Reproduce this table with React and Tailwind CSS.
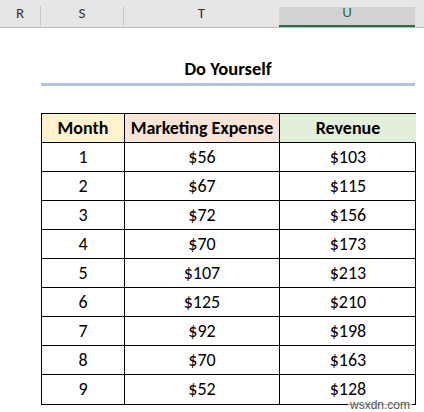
const rows = [
  [1, '$56', '$103'],
  [2, '$67', '$115'],
  [3, '$72', '$156'],
  [4, '$70', '$173'],
  [5, '$107', '$213'],
  [6, '$125', '$210'],
  [7, '$92', '$198'],
  [8, '$70', '$163'],
  [9, '$52', '$128'],
];

const font = { fontFamily: 'Carlito, Lato, "Liberation Sans", sans-serif' };

export default function App() {
  return (
    <div className="w-[424px] h-[412px] bg-white relative overflow-hidden" style={font}>
      {/* Column headers */}
      <div className="flex h-[28px] bg-[#e6e6e6] border-b border-[#bcbcbc] text-[15px] text-[#333]">
        <div className="w-[41px] flex items-end justify-center pb-[3px] border-r border-[#c8c8c8] mt-[6px]">R</div>
        <div className="w-[83px] flex items-end justify-center pb-[3px] border-r border-[#c8c8c8] mt-[6px]">S</div>
        <div className="w-[155px] flex items-end justify-center pb-[3px] mt-[6px]">T</div>
        <div className="w-[136px] flex items-end justify-center pb-[2px] bg-[#d2d2d2] border-b-2 border-[#217346] mt-[7px] text-[#217346]">U</div>
        <div className="flex-1" />
      </div>

      {/* Title */}
      <div className="ml-[41px] w-[374px] pt-[30px]">
        <div className="text-center font-bold text-[18.5px] leading-[22px] text-black">Do Yourself</div>
        <div className="mt-[3px] h-[3px] bg-[#aec5e2]" />
      </div>

      {/* Table */}
      <div className="ml-[41px] mt-[27px] w-[375px] border border-black grid grid-cols-[83px_155px_136px] text-[18px] text-black">
        <div className="h-[29px] flex items-center justify-center font-bold bg-[#fff2cc] border-r border-b border-black">Month</div>
        <div className="h-[29px] flex items-center justify-center font-bold bg-[#fce4d6] border-r border-b border-black">Marketing Expense</div>
        <div className="h-[29px] flex items-center justify-center font-bold bg-[#e2efda] border-b border-black">Revenue</div>
        {rows.map((r, i) => (
          <div key={i} className="contents">
            <div className={`h-[29px] flex items-center justify-center border-r border-black ${i < rows.length - 1 ? 'border-b' : ''}`}>{r[0]}</div>
            <div className={`h-[29px] flex items-center justify-center border-r border-black ${i < rows.length - 1 ? 'border-b' : ''}`}>{r[1]}</div>
            <div className={`h-[29px] flex items-center justify-center border-black ${i < rows.length - 1 ? 'border-b' : ''}`}>{r[2]}</div>
          </div>
        ))}
      </div>

      {/* Watermark */}
      <div className="absolute right-[12px] bottom-0 text-[12px] leading-[14px] text-[#555] bg-white/70 px-[2px]" style={{ fontFamily: '"Liberation Sans", sans-serif' }}>wsxdn.com</div>
    </div>
  );
}
